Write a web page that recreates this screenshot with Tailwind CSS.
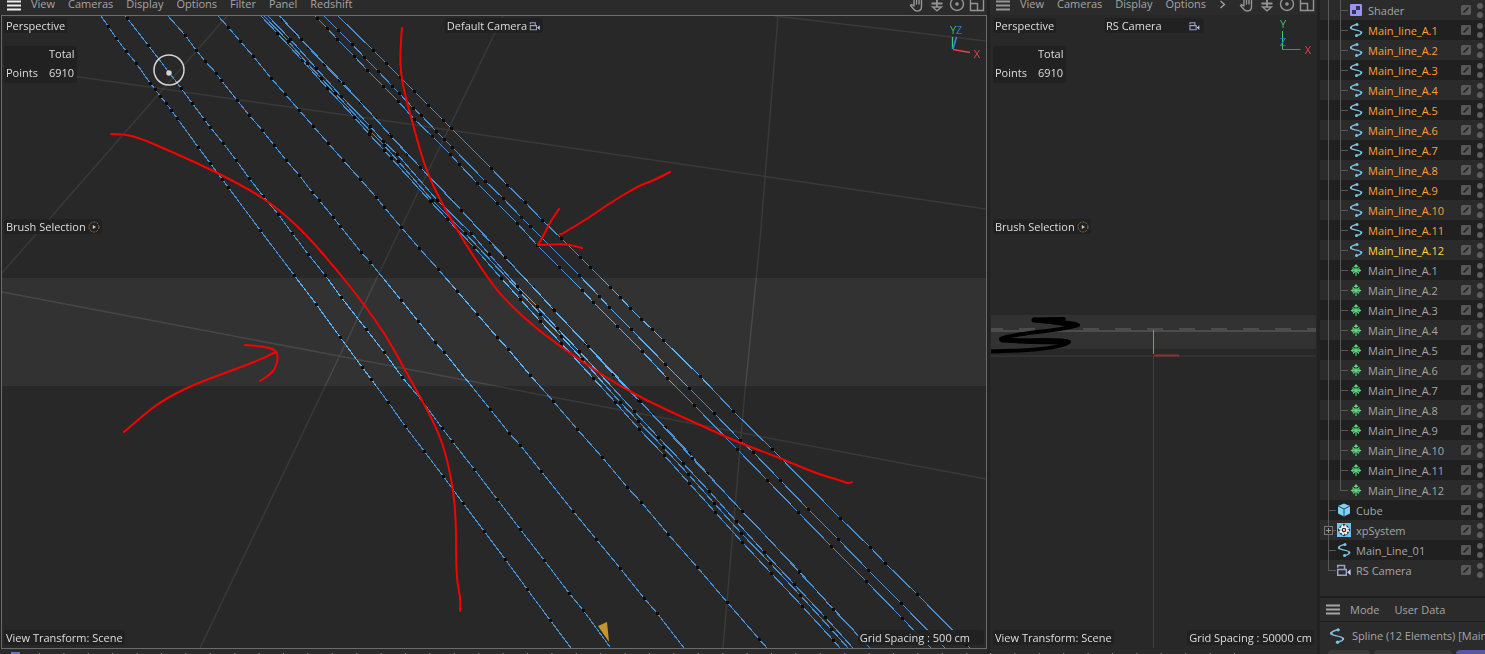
<!DOCTYPE html>
<html lang="en">
  <head>
    <meta charset="UTF-8" />
    <meta name="viewport" content="width=device-width, initial-scale=1.0" />
    <title>Viewport</title>
    <script src="https://cdn.jsdelivr.net/npm/@tailwindcss/browser@4"></script>
  </head>
  <body class="h-screen overflow-hidden bg-[#222222] font-['Open_Sans','Noto_Sans',sans-serif] text-[11px] leading-4 text-[#a5a5a5]">
    <!-- shared icons -->
    <svg class="hidden">
      <symbol id="burger" viewBox="0 0 14 12"><path d="M0 1.500h14M0 5.500h14M0 9.500h14" stroke="currentColor" stroke-width="2" /></symbol>
      <symbol id="hand" viewBox="0 0 16 16"><path d="M5 9V4.500M7.500 8V2.500M10 8V3M12.500 9V4.500M5 4.500V10L2.500 8.500L1.500 9.500L5 13.500Q6 15 8.500 15Q12.500 15 12.500 10.500V8" fill="none" stroke="currentColor" stroke-width="1.400" stroke-linecap="round" stroke-linejoin="round" /></symbol>
      <symbol id="dolly" viewBox="0 0 16 16"><path d="M2.500 7.500h11M8 1v10" fill="none" stroke="currentColor" stroke-width="1.800" /><path d="M3.500 11h9l-4.500 3.800z" fill="none" stroke="currentColor" stroke-width="1.300" /></symbol>
      <symbol id="orbit" viewBox="0 0 16 16"><circle cx="8" cy="8" r="6.500" fill="none" stroke="currentColor" stroke-width="1.400" /><circle cx="8" cy="8" r="1.800" fill="currentColor" /></symbol>
      <symbol id="maximize" viewBox="0 0 16 16"><path d="M1.500 1.500h13v13h-13zM1.500 7.500h7v7" fill="none" stroke="currentColor" stroke-width="1.400" /></symbol>
      <symbol id="camera" viewBox="0 0 14 12"><path d="M1.500 5.500h7.500v5h-7.500zM1.500 4V2h6v3" fill="none" stroke="#9aa3c8" stroke-width="1.300" /><path d="M9.800 8l3-2.800v5.600z" fill="#c5cdf5" /></symbol>
      <symbol id="play" viewBox="0 0 12 12"><circle cx="6" cy="6" r="5" fill="none" stroke="#a0703f" stroke-dasharray="2 1.200" /><path d="M4.800 4l3.200 2l-3.200 2z" fill="#ccc" /></symbol>
      <symbol id="spline" viewBox="0 0 16 16"><path d="M8.500 2.500C4.500 3.500 1.500 5 3 6.500S13 8 13.500 10.500C13.500 12 11 13 8.500 13.500" fill="none" stroke="#7cc4e4" stroke-width="1.300" /><circle cx="9" cy="2.500" r="1.500" fill="#7cc4e4" /><circle cx="13.300" cy="10.500" r="1.100" fill="#7cc4e4" /><circle cx="8.500" cy="13.500" r="1.500" fill="#7cc4e4" /><circle cx="3" cy="5.500" r="1.100" fill="#7cc4e4" /></symbol>
      <symbol id="tree" viewBox="0 0 16 16"><path d="M8 3v11M4.500 5.500L8 8.500l3.500-3M3.500 8.500h9M5 11.500l3-3l3 3" fill="none" stroke="#5ed27c" stroke-width="1.100" /><path d="M8 2l2.500 3h-5zM2.500 8.500l3-2v4zM13.500 8.500l-3-2v4z" fill="#5ed27c" /></symbol>
      <symbol id="shader" viewBox="0 0 16 16"><rect x="2" y="2" width="12" height="12" rx="1" fill="#9a93f5" /><path d="M8 4h4v4H8zM4 8h4v4H4z" fill="#35355a" /></symbol>
      <symbol id="cube" viewBox="0 0 16 16"><path d="M8 1.500l6 2.500v7.500l-6 3l-6-3V4z" fill="#7ed0f5" /><path d="M2 4l6 3l6-3M8 7v7.500" fill="none" stroke="#2b4a5c" /></symbol>
      <symbol id="xp" viewBox="0 0 16 16"><rect x="1" y="1" width="14" height="14" fill="#6cc4f0" /><path d="M8 1.500L14.500 8L8 14.500L1.500 8z" fill="#333" /><circle cx="8" cy="8" r="5.500" fill="#333" /><circle cx="8" cy="8" r="4.200" fill="none" stroke="#fff" stroke-width="1.600" stroke-dasharray="2 1.300" /><circle cx="8" cy="8" r="3" fill="none" stroke="#fff" stroke-width="1.300" /><circle cx="8" cy="8" r="1" fill="#fff" /></symbol>
      <symbol id="layer" viewBox="0 0 10 10"><rect width="10" height="10" rx="1.500" fill="#585858" /><path d="M2.500 7.500l5-5" stroke="#222" stroke-width="1.600" /></symbol>
    </svg>

    <main class="grid h-full grid-cols-[minmax(0,1fr)_327px_165px] gap-x-[3px]">
      <!-- main view -->
      <section class="flex min-w-0 flex-col">
        <header class="flex h-[15px] shrink-0 items-end overflow-hidden bg-[#2b2b2b] pr-0.5 pb-[3px] pl-[7px]">
          <button aria-label="Panel menu" class="mr-[10px] text-[#f0f0f0]"><svg class="h-3 w-3.5"><use href="#burger" /></svg></button>
          <nav class="flex flex-1 gap-[13px]">
            <button>View</button><button>Cameras</button><button>Display</button><button>Options</button><button>Filter</button><button>Panel</button><button>Redshift</button>
          </nav>
          <div class="flex gap-1 text-[#959595]">
            <button aria-label="Pan"><svg class="size-4"><use href="#hand" /></svg></button>
            <button aria-label="Dolly"><svg class="size-4"><use href="#dolly" /></svg></button>
            <button aria-label="Orbit"><svg class="size-4"><use href="#orbit" /></svg></button>
            <button aria-label="Maximize"><svg class="size-4"><use href="#maximize" /></svg></button>
          </div>
        </header>
        <div class="relative isolate ml-px flex-1 overflow-hidden border border-[#6c6c6c] bg-[#282828] leading-[15px] text-[#dedede]">
          <svg class="absolute inset-0 size-full" viewBox="2 16 984 632" preserveAspectRatio="xMidYMid slice">
            <g fill="none" stroke="#393939" stroke-width="1.500">
              <path d="M227 16L2 273M2 66L367 118L986 209M503 16L395 240L200 648M778 16L760 240L744 402L723 648M775 16L986 41M2 292L360 360L568 400L986 479" />
            </g>
            <g id="strands" fill="none" stroke="#458fd4" stroke-width="1.100" shape-rendering="crispEdges"></g>
            <path d="M598 626L607 622L609 642z" fill="#c6962c" />
            <rect x="-400" y="278" width="1800" height="108" fill="#333" class="mix-blend-color-dodge" />
            <g fill="none" stroke="#d5d5d5" stroke-width="1.500">
              <circle cx="169" cy="70" r="15" />
              <circle cx="169" cy="73" r="2" fill="#d5d5d5" />
            </g>
            <g id="notes" fill="none" stroke="#f80000" stroke-width="2" stroke-linecap="round" stroke-linejoin="round"></g>
            <g fill="none" stroke-width="1.300">
              <path d="M952.500 37V49" stroke="#35d070" /><path d="M953 49L956.500 37" stroke="#3478e0" stroke-width="1.800" /><path d="M953 49.500L970 52.500" stroke="#e04545" />
            </g>
            <g font-size="11" text-anchor="middle"><text x="953" y="34" fill="#35c070">Y</text><text x="959" y="34" fill="#3478e0">Z</text><text x="977" y="58" fill="#e04545">X</text></g>
          </svg>
          <div class="absolute top-0.5 left-0.5 rounded-[3px] bg-[#202020]/90 px-0.5">Perspective</div>
          <div class="absolute top-0.5 left-1/2 flex -translate-x-1/2 items-center gap-0.5 rounded-[3px] bg-[#202020]/90 px-0.5">Default Camera <svg class="h-2.5 w-3"><use href="#camera" /></svg></div>
          <dl class="absolute top-[30px] left-0.5 grid grid-cols-[43px_auto] gap-y-1 rounded-[3px] bg-[#202020]/90 px-0.5 pb-[3px]">
            <dt class="col-start-2">Total</dt><dt class="col-start-1">Points</dt><dd>6910</dd>
          </dl>
          <button class="absolute top-[203px] left-0.5 flex items-center gap-0.5 rounded-[3px] bg-[#202020]/90 px-0.5">Brush Selection <svg class="size-3"><use href="#play" /></svg></button>
          <div class="absolute bottom-[3px] left-0.5 rounded-[3px] bg-[#202020]/90 px-0.5">View Transform: Scene</div>
          <div class="absolute right-0.5 bottom-[3px] rounded-[3px] bg-[#202020]/90 pr-3.5 pl-0.5">Grid Spacing : 500 cm</div>
        </div>
        <!-- timeline ruler, only its top edge shows -->
        <svg class="h-[5px] w-full shrink-0 bg-[#2a2a2a]"><path d="M11 4H20" stroke="#6f6fc0" stroke-width="2" /><path d="M39 4.500H3000" stroke="#8a8a8a" stroke-dasharray="1 23.400" /></svg>
      </section>

      <!-- camera view -->
      <section class="flex min-w-0 flex-col">
        <header class="flex h-[15px] shrink-0 items-end overflow-hidden bg-[#2b2b2b] pr-0.5 pb-[3px] pl-[6px]">
          <button aria-label="Panel menu" class="mr-[10px] text-[#959595]"><svg class="h-3 w-3.5"><use href="#burger" /></svg></button>
          <nav class="flex flex-1 gap-[13px]">
            <button>View</button><button>Cameras</button><button>Display</button><button>Options</button>
            <button aria-label="More"><svg class="h-4 w-2" viewBox="0 0 8 16"><path d="M1.500 5l4 3.500l-4 3.500" fill="none" stroke="#a5a5a5" stroke-width="1.300" /></svg></button>
          </nav>
          <div class="flex gap-1 text-[#959595]">
            <button aria-label="Pan"><svg class="size-4"><use href="#hand" /></svg></button>
            <button aria-label="Dolly"><svg class="size-4"><use href="#dolly" /></svg></button>
            <button aria-label="Orbit"><svg class="size-4"><use href="#orbit" /></svg></button>
            <button aria-label="Maximize"><svg class="size-4"><use href="#maximize" /></svg></button>
          </div>
        </header>
        <div class="relative isolate flex-1 overflow-hidden border border-[#272727] bg-[#282828] leading-[15px] text-[#dedede]">
          <svg class="absolute inset-0 size-full" viewBox="991 16 325 632" preserveAspectRatio="xMidYMid slice">
            <path d="M900 331H1400" stroke="#3d3d3d" stroke-width="2" />
            <path d="M987 329H1400" stroke="#3d3d3d" stroke-width="2" stroke-dasharray="16 16" />
            <path d="M900 356H1400" stroke="#3a3a3a" />
            <path d="M1153.500 356V660" stroke="#3f3f3f" />
            <path d="M1064 319L1035 319.500C1045 322 1070 321 1078 325C1065 331 1010 333 1001 339C1010 343 1060 337 1069 342C1060 349 1025 351 985 351.500" fill="none" stroke="#000" stroke-width="4" stroke-linecap="round" stroke-linejoin="round" />
            <path d="M1034 320L1050 321.500L1076 325M1002 340L1030 341.500L1066 342" fill="none" stroke="#000" stroke-width="5" stroke-linecap="round" />
            <rect x="800" y="315" width="800" height="34" fill="#333" class="mix-blend-color-dodge" />
            <path d="M1153.500 330V354" stroke="#3cb873" />
            <path d="M1154 355.500H1179" stroke="#8a3333" stroke-width="2" />
            <path d="M1282.500 31V49.500" stroke="#35d070" /><path d="M1282 49.500H1300.500" stroke="#e04545" />
            <g font-size="11" text-anchor="middle"><text x="1283" y="28" fill="#35c070">Y</text><text x="1283" y="46" fill="#3478e0">Z</text><text x="1308" y="54" fill="#e04545">X</text></g>
          </svg>
          <div class="absolute top-0.5 left-0.5 rounded-[3px] bg-[#202020]/90 px-0.5">Perspective</div>
          <div class="absolute top-0.5 left-1/2 flex w-[99px] -translate-x-1/2 items-center justify-between rounded-[3px] bg-[#202020]/90 pr-[3px] pl-0.5">RS Camera <svg class="h-2.5 w-3"><use href="#camera" /></svg></div>
          <dl class="absolute top-[30px] left-0.5 grid grid-cols-[43px_auto] gap-y-1 rounded-[3px] bg-[#202020]/90 px-0.5 pb-[3px]">
            <dt class="col-start-2">Total</dt><dt class="col-start-1">Points</dt><dd>6910</dd>
          </dl>
          <button class="absolute top-[203px] left-0.5 flex items-center gap-0.5 rounded-[3px] bg-[#202020]/90 px-0.5">Brush Selection <svg class="size-3"><use href="#play" /></svg></button>
          <div class="absolute bottom-[3px] left-0.5 rounded-[3px] bg-[#202020]/90 px-0.5">View Transform: Scene</div>
          <div class="absolute right-0.5 bottom-[3px] rounded-[3px] bg-[#202020]/90 px-0.5">Grid Spacing : 50000 cm</div>
        </div>
        <svg class="h-[5px] w-full shrink-0 bg-[#2a2a2a]"><path d="M0 4.500H260" stroke="#8a8a8a" stroke-dasharray="1 23.400" /></svg>
      </section>

      <!-- object manager and attributes -->
      <aside class="flex min-w-0 flex-col overflow-hidden bg-[#2b2b2b]">
        <ul id="objects" class="shrink-0"></ul>
        <div class="mt-4 flex h-[25px] shrink-0 items-center border-t-2 border-[#1e1e1e] pl-1.5">
          <button aria-label="Attribute menu" class="mr-[10px]"><svg class="h-3 w-3.5"><use href="#burger" /></svg></button>
          <button class="mr-[15px]">Mode</button><button>User Data</button>
        </div>
        <div class="flex h-[29px] shrink-0 items-center gap-1.5 border-t border-[#1e1e1e] pl-2 whitespace-nowrap"><svg class="size-[18px] shrink-0"><use href="#spline" /></svg>Spline (12 Elements) [Main_line_A]</div>
        <div class="flex gap-1 pl-2">
          <button aria-label="Basic" class="h-4 w-[42px] shrink-0 rounded-t bg-[#3a3a3a]"></button>
          <button aria-label="Coordinates" class="h-4 w-[78px] shrink-0 rounded-t bg-[#3a3a3a]"></button>
          <button aria-label="Object" class="h-4 w-[60px] shrink-0 rounded-t bg-[#5557a5]"></button>
        </div>
      </aside>
    </main>

    <script>
      // spline points, x,y pairs
      const strands = [
        "101,16 108,26 116,38 126,51 136,63 150,83 155,89 160,96 166,103 171,110 177,118 198,147 210,163 222,179 228,187 260,230 294,275 316,304 340,337 362,367 371,379 388,402 405,426 424,451 443,476 463,503 484,531 505,559 527,589 550,620 571,648",
        "125,16 127,18 148,45 181,88 192,103 204,119 210,127 223,143 236,160 249,178 263,196 278,214 292,233 308,254 325,275 341,297 366,329 384,352 402,377 423,402 442,428 452,441 474,469 497,499 520,529 544,560 569,593 583,610 610,647",
        "168,16 185,35 196,50 205,61 216,73 221,80 237,100 249,115 262,130 274,145 286,160 299,175 312,192 319,200 333,217 340,226 361,252 370,262 401,300 418,321 435,342 444,352 490,409 509,433 520,445 541,471 573,511 596,539 620,568 644,598 657,613 684,648",
        "218,16 228,27 240,41 253,56 271,78 285,94 299,110 313,126 328,143 343,160 360,179 376,197 384,207 401,227 419,248 438,269 457,291 477,314 497,337 508,349 530,375 553,401 577,429 602,457 627,487 641,502 668,534 697,567 727,602 759,639 767,648",
        "261,16 277,33 302,60 327,88 354,117 369,134 384,150 391,158 430,201 447,219 474,247 501,278 520,299 540,321 561,343 593,378 615,402 639,429 664,455 689,483 715,512 742,542 771,573 802,606 833,640 840,648",
        "264,16 288,41 307,63 321,78 335,93 370,131 384,145 398,161 432,200 465,233 520,292 540,314 561,336 582,359 620,402 638,421 663,447 688,474 714,503 741,533 770,563 800,595 831,629 848,648",
        "268,16 290,39 316,68 341,96 370,126 383,141 397,154 437,200 471,233 489,254 517,286 537,306 557,328 579,351 634,411 658,437 683,463 709,491 736,521 764,552 794,584 825,617 853,648",
        "279,16 282,19 295,33 308,47 324,64 339,80 360,102 375,118 389,134 407,154 426,173 452,200 471,221 490,242 511,264 533,287 553,309 585,343 613,374 638,400 652,414 665,427 689,453 707,473 736,505 768,538 799,572 829,604 870,648",
        "280,16 301,39 343,83 391,136 420,167 461,210 505,257 554,310 588,346 640,401 692,458 742,511 799,571 833,609 868,646",
        "315,16 317,18 327,28 337,39 354,56 367,70 383,86 398,101 414,119 432,136 450,154 459,164 477,183 497,203 517,223 537,245 559,267 582,290 593,302 617,326 642,351 667,378 694,405 737,449 767,480 798,512 831,546 866,581 902,618 931,648",
        "324,16 338,30 352,44 364,57 378,71 392,86 399,93 413,108 421,115 436,131 444,139 452,147 485,181 503,198 521,217 530,226 579,275 599,296 609,307 631,329 665,364 689,388 714,413 740,440 753,452 780,480 808,509 838,539 868,570 901,603 945,648",
        "338,16 373,50 386,63 400,77 414,91 428,105 443,120 451,128 491,168 507,185 525,202 542,220 561,238 580,257 590,267 610,287 620,297 630,308 641,319 652,329 663,340 700,376 733,411 772,449 840,518 870,547 885,563 917,594 966,644 970,648"
      ];
      document.getElementById("strands").innerHTML = strands.map((s) => {
        const dots = s.split(" ").slice(1, -1).map((p) => {
          const [x, y] = p.split(",");
          return `<rect x="${x - 1}" y="${y - 1}" width="3" height="3" fill="#0a0a0a" stroke="none" />`;
        });
        return `<polyline points="${s}" />` + dots.join("");
      }).join("");

      // hand drawn notes, smoothed through the midpoints
      const notes = [
        "111,134 125,134 142,139 170,151 214,171 250,190 270,203 290,219 311,240 336,269 360,299 386,335 405,370 433,420 445,450 453,488 456,520 456,555 457,582 461,600 460,611",
        "402,28 400,50 401,78 409,110 420,150 427,172 441,202 463,240 487,277 505,300 540,332 590,367 620,386 650,402 680,416 720,434 740,443 780,458 815,473 842,481 849,484 852,482",
        "670,172 655,180 640,185 610,203 587,219 565,232 562,234 560,234",
        "559,209 550,222 545,233 538,245",
        "538,245 560,244 572,245 582,248",
        "124,432 140,418 160,402 190,386 230,371 260,360 276,352",
        "245,345 262,346 277,350 278,362 272,374 260,381"
      ];
      document.getElementById("notes").innerHTML = notes.map((n) => {
        const p = n.split(" ").map((v) => v.split(",").map(Number));
        let d = `M${p[0]}`;
        for (let i = 1; i < p.length - 1; i++) {
          const end = i === p.length - 2 ? p[i + 1] : [(p[i][0] + p[i + 1][0]) / 2, (p[i][1] + p[i + 1][1]) / 2];
          d += `Q${p[i]} ${end}`;
        }
        return `<path d="${d}" />`;
      }).join("");

      // object tree
      const rows = [{ icon: "shader", name: "Shader", child: true }];
      for (let i = 1; i <= 12; i++) rows.push({ icon: "spline", name: "Main_line_A." + i, child: true, color: i === 12 ? "text-[#ffd83a]" : "text-[#f9a038]" });
      for (let i = 1; i <= 12; i++) rows.push({ icon: "tree", name: "Main_line_A." + i, child: true, last: i === 12 });
      rows.push({ icon: "cube", name: "Cube" }, { icon: "xp", name: "xpSystem", plus: true }, { icon: "spline", name: "Main_Line_01" }, { icon: "camera", name: "RS Camera", end: true });

      document.getElementById("objects").innerHTML = rows.map((r) => {
        let d = r.end ? "M8.5 0V11" : "M8.5 0V20";
        if (r.child) d += r.last ? "M20.5 0V11M20 10.500H28" : "M20.5 0V20M20 10.500H28";
        else d += "M8 10.500H16";
        const plus = r.plus ? '<rect x="4.500" y="6.500" width="8" height="8" fill="#2b2b2b" stroke="#777" /><path d="M6 10.500h5M8.500 8v5" stroke="#999" />' : "";
        return `<li class="flex h-5 items-center odd:bg-[#2b2b2b] even:bg-[#202020]">
          <svg class="${r.child ? "w-7" : "w-4"} h-5 shrink-0"><path d="${d}" fill="none" stroke="#585858" />${plus}</svg>
          <svg class="size-4 shrink-0"><use href="#${r.icon}" /></svg>
          <button class="ml-1 flex-1 pt-0.5 text-left ${r.color || ""}">${r.name}</button>
          <svg class="mr-1.5 size-2.5"><use href="#layer" /></svg>
          <svg class="h-5 w-2" viewBox="0 0 8 20"><circle cx="3" cy="6" r="3" fill="#5c5c5c" /><circle cx="3" cy="15" r="3" fill="#5c5c5c" /></svg>
        </li>`;
      }).join("");
    </script>
  </body>
</html>
